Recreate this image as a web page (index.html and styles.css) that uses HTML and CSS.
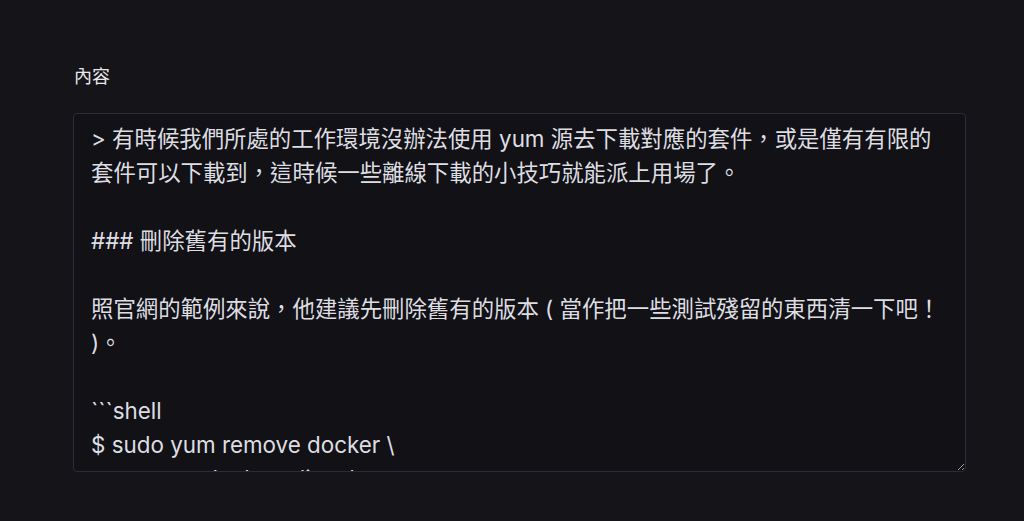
FILE: index.html
```html
<!DOCTYPE html>
<html lang="zh-Hant">
<head>
<meta charset="utf-8">
<title>內容</title>
<link rel="stylesheet" href="styles.css">
</head>
<body>
<main class="page">
  <div class="field">
    <label class="field-label" for="content">內容</label>
    <textarea id="content" class="field-input" spellcheck="false">&gt; 有時候我們所處的工作環境沒辦法使用 yum 源去下載對應的套件，或是僅有有限的套件可以下載到，這時候一些離線下載的小技巧就能派上用場了。

### 刪除舊有的版本

照官網的範例來說，他建議先刪除舊有的版本 ( 當作把一些測試殘留的東西清一下吧！ )。

```shell
$ sudo yum remove docker \
                  docker-client \
                  docker-client-latest \
                  docker-common \
</textarea>
  </div>
</main>
</body>
</html>
```

FILE: styles.css
```css
html, body {
  margin: 0;
  padding: 0;
  background: #141419;
}
body {
  font-family: Inter, "Noto Sans CJK TC", sans-serif;
  color: #e4e4e7;
}
.page {
  padding: 64px 58px 0 73px;
}
.field {
  display: flex;
  flex-direction: column;
  gap: 23px;
}
.field-label {
  font-size: 18px;
  line-height: 26px;
  padding-left: 1px;
  color: #e8e8ec;
}
.field-input {
  box-sizing: border-box;
  width: 893px;
  height: 359px;
  margin: 0;
  padding: 8px 18px 8px 17px;
  background: #111116;
  border: 1px solid #2c2b38;
  border-radius: 4px;
  color: #dedee2;
  color-scheme: dark;
  font-family: Inter, "Noto Sans CJK TC", sans-serif;
  font-size: 22.4px;
  line-height: 34px;
  overflow: hidden;
  resize: vertical;
  outline: none;
}
```
